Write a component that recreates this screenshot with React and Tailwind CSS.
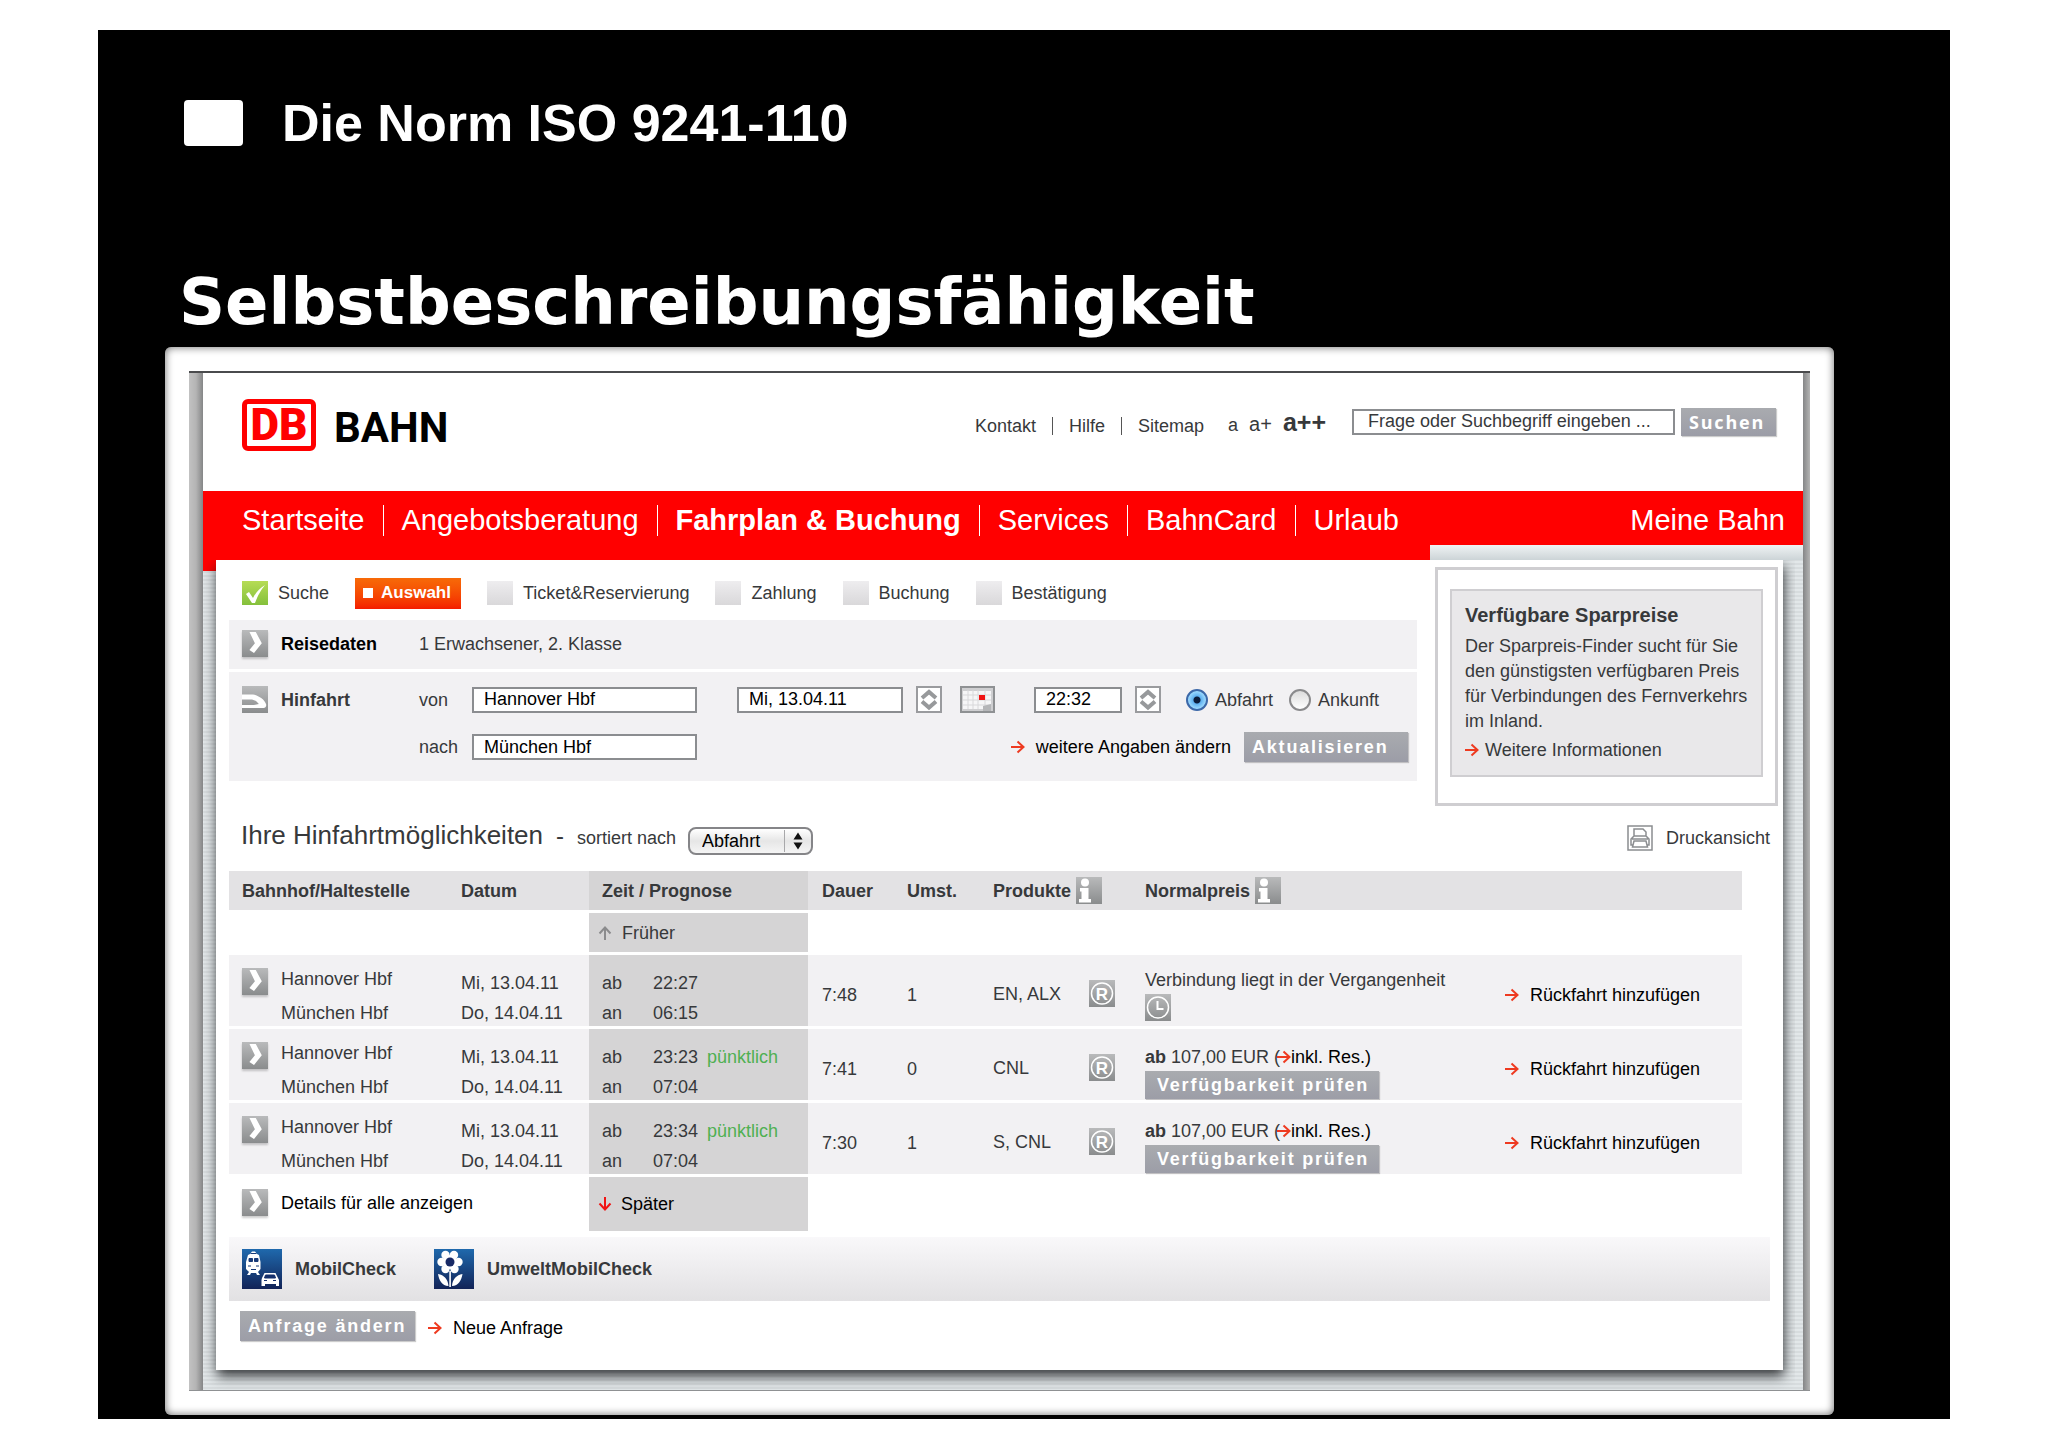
const navItems = [
  { label: 'Startseite' },
  { label: 'Angebotsberatung' },
  { label: 'Fahrplan & Buchung', active: true },
  { label: 'Services' },
  { label: 'BahnCard' },
  { label: 'Urlaub' },
]

const openSteps = ['Ticket&Reservierung', 'Zahlung', 'Buchung', 'Bestätigung']

const connections = [
  { id: 1, dep: '22:27', arr: '06:15', onTime: false, duration: '7:48', changes: 1, products: 'EN, ALX', price: null },
  { id: 2, dep: '23:23', arr: '07:04', onTime: true, duration: '7:41', changes: 0, products: 'CNL', price: '107,00 EUR' },
  { id: 3, dep: '23:34', arr: '07:04', onTime: true, duration: '7:30', changes: 1, products: 'S, CNL', price: '107,00 EUR' },
]

const cell = 'border-t-[3px] border-white bg-[#f2f1f3] p-0 align-top'
const timeCell = 'border-t-[3px] border-white bg-[#d5d4d5] p-0'
const field = 'h-[26px] border-2 border-[#8b8d90] bg-white pl-[10px] text-black'

function ArrowIcon({ className = 'text-[#ee3a20]' }) {
  return (
    <svg viewBox="0 0 14 14" className={`h-[14px] w-[14px] shrink-0 ${className}`} fill="none" stroke="currentColor" strokeWidth="2">
      <path d="M0 7h12M6.5 1.5L12.5 7l-6 5.5" />
    </svg>
  )
}

function Tile({ children, className = 'h-[27px] w-[26px]' }) {
  return (
    <svg viewBox="0 0 26 27" className={`shrink-0 ${className}`}>
      <defs>
        <linearGradient id="tile" x1="0" y1="0" x2="0" y2="1">
          <stop offset="0" stopColor="#b9babb" />
          <stop offset="1" stopColor="#8a8c8d" />
        </linearGradient>
      </defs>
      <rect width="26" height="27" fill="url(#tile)" />
      {children}
    </svg>
  )
}

function ChevronTile() {
  return (
    <Tile className="h-[27px] w-[26px] shadow-[0_2px_2px_rgba(0,0,0,0.2)]">
      <path d="M7.5 2h6.3l6 11.2-7.8 9.8-4.6-3 5.5-6.8z" fill="#fff" />
    </Tile>
  )
}

function TrainTile() {
  return (
    <Tile>
      <path d="M0 8.5h11c6 1 11.5 5 13 9.500.8 2-.5 4-2.500 4H0v-3h12l5-1-1-.8c-2-2.700-4.500-3.700-7.500-3.700H0z" fill="#fff" />
    </Tile>
  )
}

function InfoTile() {
  return (
    <Tile>
      <circle cx="9" cy="5.500" r="4" fill="#fff" />
      <path d="M4 11h8.500v11H15v3.500H3V22h2.500v-7.500H4z" fill="#fff" />
    </Tile>
  )
}

function ReservationTile() {
  return (
    <Tile>
      <circle cx="13" cy="13.500" r="10.500" fill="none" stroke="#fff" strokeWidth="1.500" />
      <text x="13" y="19.500" textAnchor="middle" fontSize="17" fontWeight="700" fill="#fff">R</text>
    </Tile>
  )
}

function ClockTile() {
  return (
    <Tile>
      <circle cx="13" cy="13.500" r="10.500" fill="none" stroke="#fff" strokeWidth="1.500" />
      <path d="M12.500 7v8h6" fill="none" stroke="#fff" strokeWidth="2" />
    </Tile>
  )
}

function SpinButton({ label }) {
  return (
    <button aria-label={label} className="h-[27px] w-[26px] shrink-0 border-2 border-[#9a9b9e] bg-white">
      <svg viewBox="1 1 22 23" className="h-[23px] w-[22px]" fill="none" stroke="#97999b" strokeWidth="4">
        <path d="M5 11l7-6 7 6M5 14.500l7 6 7-6" />
      </svg>
    </button>
  )
}

function CalendarButton() {
  return (
    <button aria-label="Kalender" className="h-[27px] w-[35px] shrink-0">
      <svg viewBox="0 0 35 27" className="h-[27px] w-[35px]">
        <rect x="1" y="1" width="33" height="25" fill="#cfcfd1" stroke="#8f9193" strokeWidth="2" />
        <rect x="3" y="5" width="28" height="18" fill="#f6f6f7" />
        <path d="M3 9h28M3 14h28M3 19h28M8 4v19M13 4v19M18 4v19M25 4v19" stroke="#d8d8da" />
        <path d="M23 25v-5l8-2v7z" fill="#b5b6b8" />
        <rect x="19" y="9" width="6" height="5" fill="#f01414" />
      </svg>
    </button>
  )
}

function PrinterIcon() {
  return (
    <svg viewBox="0 0 26 26" className="h-[26px] w-[26px] shrink-0" fill="none" stroke="#8b8d90" strokeWidth="1.500">
      <rect x="1" y="1" width="24" height="24" />
      <path d="M7 11V4h9l3 3v4M6 20H4v-6l3-3h12l3 3v6h-2M7 16h12l1.500 6h-15zM5 14h16" />
    </svg>
  )
}

function MobilIcon() {
  return (
    <svg viewBox="0 0 40 40" className="h-10 w-10 shrink-0">
      <defs>
        <linearGradient id="blue" x1="0" y1="0" x2="0" y2="1">
          <stop offset="0" stopColor="#1f69ad" />
          <stop offset="1" stopColor="#122357" />
        </linearGradient>
      </defs>
      <rect width="40" height="40" fill="url(#blue)" />
      <path d="M8 5l2-2.500h3L15 5l2 1 1.500 7v7l-2.500 3 2 3h-3l-1-2H9l-1 2H5l2-3-3-3v-7L6 6z" fill="#fff" />
      <path d="M7 9.500h3.500v3H7zM12.500 9.500H16v3h-3.500zM8.500 4.500h6M6 17h3M14 17h3M9 20.500h5" fill="#173a78" stroke="#173a78" />
      <path d="M20 29l2.500-5h11l2.500 5 1 2v6h-3v-2H23v2h-3.500v-6z" fill="#fff" />
      <path d="M23.500 26h9l1 3h-11zM22 31.500h3M31 31.500h3" fill="#15306c" stroke="#15306c" />
    </svg>
  )
}

function FlowerIcon() {
  return (
    <svg viewBox="0 0 40 40" className="h-10 w-10 shrink-0" fill="#fff">
      <rect width="40" height="40" fill="url(#blue)" />
      <circle cx="11.500" cy="6" r="4.200" />
      <circle cx="20" cy="6" r="4.200" />
      <circle cx="7.500" cy="13" r="4.200" />
      <circle cx="24.500" cy="13" r="4.200" />
      <circle cx="11.500" cy="20" r="4.200" />
      <circle cx="20.500" cy="20" r="4.200" />
      <circle cx="16" cy="13" r="7" />
      <circle cx="16" cy="13" r="4.500" fill="#182a66" />
      <path d="M15.300 22h1.600v16h-1.600z" />
      <path d="M14.500 37C8 37 5 31 4 25c6 1 10 5 10.500 12zM18 37c6.500 0 9.500-6 10.500-12-6 1-10 5-10.500 12z" />
    </svg>
  )
}

function GreyButton({ children, className }) {
  return (
    <button className={`bg-linear-to-b from-[#a9abaf] to-[#9c9da7] text-left font-bold tracking-widest whitespace-nowrap text-white shadow-[1px_1px_1px_rgba(0,0,0,0.2)] ${className}`}>
      {children}
    </button>
  )
}

function Radio({ label, checked }) {
  return (
    <label className="flex items-center gap-[7px]">
      <input
        type="radio"
        name="timeMode"
        defaultChecked={checked}
        className="h-[22px] w-[22px] appearance-none rounded-full border-2 border-[#8a8a8c] bg-linear-to-b from-[#dcdcdc] to-white checked:border-[#3c68a8] checked:bg-[radial-gradient(circle,#0b1c3a_0_3px,#5fb0ef_4px,#9fdcff_9px)]"
      />
      {label}
    </label>
  )
}

function SiteHeader() {
  return (
    <header className="flex h-[118px] items-start bg-white pr-[27px] pl-[39px]">
      <a href="#" className="mt-[26px] flex items-center gap-[18px] font-['Roboto',sans-serif] font-bold leading-none">
        <span className="flex h-[52px] w-[74px] items-center justify-center rounded-md border-[5px] border-[#f00] text-[44px] font-black text-[#f00]">DB</span>
        <span className="pt-[6px] text-[42px] text-black">BAHN</span>
      </a>
      <div className="mt-[32px] ml-auto flex items-center">
        <div className="flex items-center gap-4 pt-[9px]">
          <a href="#">Kontakt</a>
          <span className="h-[18px] w-px bg-[#555]" />
          <a href="#">Hilfe</a>
          <span className="h-[18px] w-px bg-[#555]" />
          <a href="#">Sitemap</a>
        </div>
        <div className="mr-[26px] ml-6 flex items-baseline gap-[11px] pt-[3px]">
          <a href="#">a</a>
          <a href="#" className="text-[20px]">a+</a>
          <a href="#" className="text-[25px] font-bold">a++</a>
        </div>
        <input aria-label="Suche" defaultValue="Frage oder Suchbegriff eingeben ..." className="h-[26px] w-[323px] border-2 border-[#8b8d90] bg-white pl-[14px]" />
        <GreyButton className="ml-[6px] h-[28px] w-[95px] pl-2 font-['Open_Sans',sans-serif]">Suchen</GreyButton>
      </div>
    </header>
  )
}

function MainNav() {
  return (
    <>
      <nav className="flex h-[54px] items-center bg-[#f00] pt-1 pr-[18px] pl-[39px] text-[29px] leading-none text-white">
        {navItems.map((item, i) => (
          <div key={item.label} className="flex items-center">
            {i > 0 && <span className="mx-[18px] h-[31px] w-px bg-white" />}
            <a href="#" className={item.active ? 'font-bold' : ''}>{item.label}</a>
          </div>
        ))}
        <a href="#" className="ml-auto">Meine Bahn</a>
      </nav>
      <div className="flex">
        <div className="h-[15px] flex-1 bg-[#f00]" />
        <div className="h-[15px] w-[373px] bg-linear-to-b from-[#f0f3f4] to-[#ccd4d7]" />
      </div>
    </>
  )
}

function Steps() {
  return (
    <ol className="flex h-[60px] items-center gap-[26px] pt-[6px] pl-[13px]">
      <li className="flex items-center gap-[10px]">
        <svg viewBox="0 0 26 24" className="h-6 w-[26px]">
          <defs>
            <linearGradient id="green" x1="0" y1="0" x2="0" y2="1">
              <stop offset="0" stopColor="#b6dc55" />
              <stop offset="1" stopColor="#84c03c" />
            </linearGradient>
          </defs>
          <rect width="26" height="24" fill="url(#green)" />
          <path d="M4 13l3-2 4 6C14 11 18 7 23 4c-4 5-7 10-10 18h-3z" fill="#fff" />
        </svg>
        <a href="#">Suche</a>
      </li>
      <li className="flex h-[31px] w-[106px] items-center gap-2 bg-linear-to-b from-[#f76a08] to-[#f41a00] pl-2 text-[17px] font-bold text-white">
        <span className="h-[10px] w-[10px] bg-white" />
        Auswahl
      </li>
      {openSteps.map((step) => (
        <li key={step} className="flex items-center gap-[10px]">
          <span className="h-6 w-[26px] bg-linear-to-b from-[#eeedef] to-[#d9d8da]" />
          {step}
        </li>
      ))}
    </ol>
  )
}

function SearchForm() {
  return (
    <form className="flex flex-col gap-[3px]" onSubmit={(e) => e.preventDefault()}>
      <div className="flex h-[49px] items-center bg-[#f2f1f3] pb-[2px] pl-[13px]">
        <ChevronTile />
        <a href="#" className="ml-[13px] w-[138px] font-bold text-black">Reisedaten</a>
        1 Erwachsener, 2. Klasse
      </div>
      <div className="flex h-[109px] flex-col gap-[19px] bg-[#f2f1f3] pt-[14px] pr-[9px] pl-[13px]">
        <div className="flex items-center">
          <TrainTile />
          <span className="ml-[13px] w-[138px] font-bold">Hinfahrt</span>
          <label htmlFor="from" className="w-[53px]">von</label>
          <input id="from" defaultValue="Hannover Hbf" className={`${field} w-[225px]`} />
          <input aria-label="Datum" defaultValue="Mi, 13.04.11" className={`${field} mr-[13px] ml-10 w-[166px]`} />
          <SpinButton label="Datum ändern" />
          <span className="mr-[39px] ml-[18px] flex"><CalendarButton /></span>
          <input aria-label="Uhrzeit" defaultValue="22:32" className={`${field} mr-[13px] w-[88px]`} />
          <SpinButton label="Uhrzeit ändern" />
          <div className="ml-[25px] flex gap-4">
            <Radio label="Abfahrt" checked />
            <Radio label="Ankunft" />
          </div>
        </div>
        <div className="flex items-center">
          <label htmlFor="to" className="ml-[177px] w-[53px]">nach</label>
          <input id="to" defaultValue="München Hbf" className={`${field} w-[225px]`} />
          <a href="#" className="mr-[13px] ml-auto flex items-center gap-[11px] text-black"><ArrowIcon />weitere Angaben ändern</a>
          <GreyButton className="h-[30px] w-[164px] pl-2">Aktualisieren</GreyButton>
        </div>
      </div>
    </form>
  )
}

function Sparpreise() {
  return (
    <aside className="mt-[7px] h-[239px] w-[343px] shrink-0 border-[3px] border-[#cfced1] px-3 pt-[19px]">
      <div className="h-[188px] border-2 border-[#cfced1] bg-[#e9e8ea] pt-3 pl-[13px]">
        <h3 className="mb-[7px] text-[20px] font-bold">Verfügbare Sparpreise</h3>
        <p className="leading-[25px]">
          Der Sparpreis-Finder sucht für Sie<br />
          den günstigsten verfügbaren Preis<br />
          für Verbindungen des Fernverkehrs<br />
          im Inland.
        </p>
        <a href="#" className="mt-1 flex items-center gap-[6px]"><ArrowIcon />Weitere Informationen</a>
      </div>
    </aside>
  )
}

function ResultsHeading() {
  return (
    <div className="flex h-[65px] items-center pr-[13px] pl-3">
      <h2 className="pb-[7px] text-[26px] leading-none">Ihre Hinfahrtmöglichkeiten</h2>
      <span className="mx-[13px] pb-[6px] text-[24px] leading-none">-</span>
      <label htmlFor="sort" className="pb-[2px]">sortiert nach</label>
      <div className="relative ml-3 pt-1">
        <select id="sort" className="h-[28px] w-[125px] appearance-none rounded-lg border-2 border-[#858588] bg-linear-to-b from-white via-[#e6e6e6] to-[#f5f5f5] pl-3 text-black">
          <option>Abfahrt</option>
        </select>
        <svg viewBox="0 0 30 26" className="pointer-events-none absolute top-[5px] right-0 h-[26px] w-[30px]">
          <path d="M1.500 2v22" stroke="#a8a8aa" />
          <path d="M15 4.500l4.500 7h-9zM15 21.500l4.500-7h-9z" fill="#111" />
        </svg>
      </div>
      <a href="#" className="ml-auto flex items-center gap-[13px] pb-[2px]"><PrinterIcon />Druckansicht</a>
    </div>
  )
}

function ConnectionRow({ c }) {
  return (
    <tr>
      <td className={cell}>
        <div className="flex h-[71px] gap-[13px] pl-[13px]">
          <button aria-label="Details anzeigen" className="mt-[13px] flex self-start"><ChevronTile /></button>
          <div className="flex flex-col gap-[10px] pt-3"><span>Hannover Hbf</span><span>München Hbf</span></div>
        </div>
      </td>
      <td className={cell}>
        <div className="flex flex-col gap-[6px] pt-4"><span>Mi, 13.04.11</span><span>Do, 14.04.11</span></div>
      </td>
      <td className={`${timeCell} align-top`}>
        <div className="grid grid-cols-[51px_1fr] gap-y-[6px] pt-4 pl-[13px]">
          <span>ab</span>
          <span>{c.dep}{c.onTime && <span className="ml-[9px] text-[#4fb052]">pünktlich</span>}</span>
          <span>an</span>
          <span>{c.arr}</span>
        </div>
      </td>
      <td className={cell}><div className="pt-7 pl-[14px]">{c.duration}</div></td>
      <td className={cell}><div className="pt-7">{c.changes}</div></td>
      <td className={cell}>
        <div className="flex items-center justify-between pt-[25px] pr-[30px]">{c.products}<ReservationTile /></div>
      </td>
      <td className={cell}>
        {c.price ? (
          <div className="pt-4">
            <div className="flex items-center">
              <b className="mr-[5px]">ab</b>{c.price} (<ArrowIcon className="-ml-[3px] text-[#ee3a20]" /><a href="#" className="text-black">inkl. Res.)</a>
            </div>
            <GreyButton className="mt-[2px] block h-7 w-[234px] pl-3">Verfügbarkeit prüfen</GreyButton>
          </div>
        ) : (
          <div className="pt-[13px]">
            <span className="mb-[2px] block whitespace-nowrap">Verbindung liegt in der Vergangenheit</span>
            <ClockTile />
          </div>
        )}
      </td>
      <td className={cell}>
        <a href="#" className="flex items-center gap-[11px] pt-7 text-black"><ArrowIcon />Rückfahrt hinzufügen</a>
      </td>
    </tr>
  )
}

function Results() {
  return (
    <div className="pr-[41px]">
      <table className="w-full table-fixed border-separate border-spacing-0 text-left leading-6">
        <colgroup>
          <col className="w-[232px]" />
          <col className="w-[128px]" />
          <col className="w-[219px]" />
          <col className="w-[99px]" />
          <col className="w-[86px]" />
          <col className="w-[152px]" />
          <col />
          <col className="w-[237px]" />
        </colgroup>
        <thead>
          <tr className="h-[39px] bg-[#e3e2e4]">
            <th className="p-0 pl-[13px]">Bahnhof/Haltestelle</th>
            <th className="p-0">Datum</th>
            <th className="bg-[#d5d4d5] p-0 pl-[13px]">Zeit / Prognose</th>
            <th className="p-0 pl-[14px]">Dauer</th>
            <th className="p-0">Umst.</th>
            <th className="p-0"><div className="flex items-center gap-[5px]">Produkte<InfoTile /></div></th>
            <th className="p-0"><div className="flex items-center gap-[5px]">Normalpreis<InfoTile /></div></th>
            <th className="p-0" />
          </tr>
        </thead>
        <tbody>
          <tr className="h-[42px]">
            <td colSpan={2} />
            <td className={timeCell}>
              <a href="#" className="flex items-center gap-[10px] pl-[9px]"><ArrowIcon className="-rotate-90 text-[#8b8b8d]" />Früher</a>
            </td>
            <td colSpan={5} />
          </tr>
          {connections.map((c) => <ConnectionRow key={c.id} c={c} />)}
          <tr className="h-[57px]">
            <td colSpan={2} className="p-0">
              <a href="#" className="flex items-center gap-[13px] pl-[13px] text-black"><ChevronTile />Details für alle anzeigen</a>
            </td>
            <td className={timeCell}>
              <a href="#" className="flex items-center gap-[9px] pl-[9px] text-black"><ArrowIcon className="rotate-90 text-[#f01414]" />Später</a>
            </td>
            <td colSpan={5} />
          </tr>
        </tbody>
      </table>
    </div>
  )
}

function PageFooter() {
  return (
    <>
      <div className="mt-[6px] mr-[13px] flex h-16 items-center bg-linear-to-b from-[#f9f8fa] to-[#e2e1e3] pl-[13px] font-bold">
        <a href="#" className="flex items-center gap-[13px]"><MobilIcon />MobilCheck</a>
        <a href="#" className="ml-[38px] flex items-center gap-[13px]"><FlowerIcon />UmweltMobilCheck</a>
      </div>
      <div className="mt-[10px] flex items-center pl-[11px]">
        <GreyButton className="h-[30px] w-[175px] pl-2">Anfrage ändern</GreyButton>
        <a href="#" className="ml-[13px] flex items-center gap-[11px] pt-1 text-black"><ArrowIcon />Neue Anfrage</a>
      </div>
    </>
  )
}

function BahnPage() {
  return (
    <div className="flex border-t-2 border-b border-[#4a4b4d] border-b-[#8f9193] text-[18px] leading-6 text-[#37393b]">
      <div className="w-[14px] shrink-0 bg-linear-to-r from-[#c2c2c2] via-[#b4b4b4] to-[#858687]" />
      <div className="min-w-0 flex-1 bg-[repeating-linear-gradient(to_bottom,#e2e7e9_0_2px,#d7dcde_2px_4px)]">
        <SiteHeader />
        <MainNav />
        <div className="flex">
          <div className="w-[13px] shrink-0">
            <div className="h-[11px] bg-[#f00]" />
          </div>
          <main className="mb-5 min-w-0 flex-1 bg-white pb-[29px] pl-[13px] shadow-[1px_6px_12px_rgba(20,22,25,0.85)] [clip-path:inset(0_-12px_-20px_-12px)]">
            <div className="flex gap-[18px] pr-[5px]">
              <div className="min-w-0 flex-1">
                <Steps />
                <SearchForm />
              </div>
              <Sparpreise />
            </div>
            <ResultsHeading />
            <Results />
            <PageFooter />
          </main>
          <div className="w-5 shrink-0" />
        </div>
      </div>
      <div className="w-[7px] shrink-0 bg-linear-to-r from-[#858687] to-[#b4b4b4]" />
    </div>
  )
}

export default function App() {
  return (
    <div className="bg-white px-[98px] py-[30px] font-['Liberation_Sans',Arial,sans-serif]">
      <div className="bg-black pt-[70px] pr-[116px] pb-1 pl-[67px]">
        <div className="flex items-center gap-[39px] pl-[19px]">
          <span className="h-[46px] w-[59px] rounded-sm bg-white" />
          <h1 className="text-[52px] leading-[46px] font-bold text-white">Die Norm ISO 9241-110</h1>
        </div>
        <p className="mt-[116px] pl-[14px] font-['DejaVu_Sans',Verdana,sans-serif] text-[64px] leading-[80px] font-bold text-white">
          Selbstbeschreibungsfähigkeit
        </p>
        <div className="mt-[5px] rounded-md bg-white p-6 shadow-[inset_0_0_8px_rgba(0,0,0,0.6)]">
          <BahnPage />
        </div>
      </div>
    </div>
  )
}
